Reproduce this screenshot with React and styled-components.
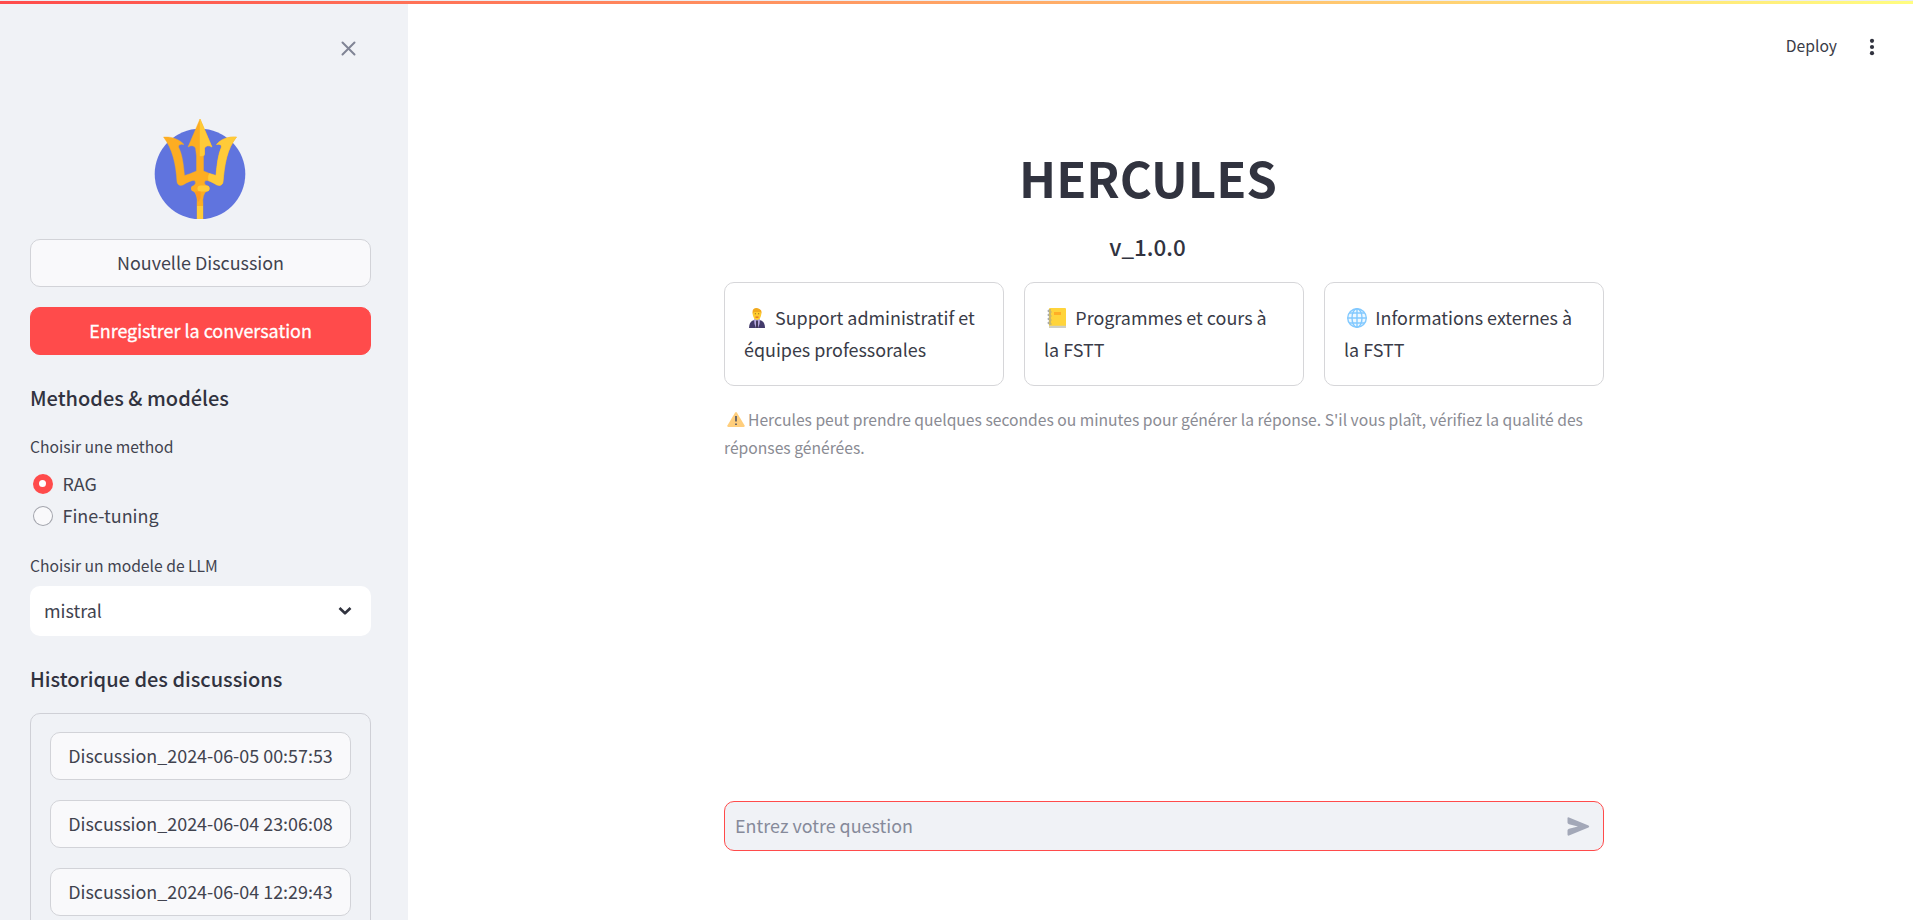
import React from "react";
import styled, { createGlobalStyle } from "styled-components";

const GlobalStyle = createGlobalStyle`
  * { box-sizing: border-box; }
  body {
    margin: 0;
    background: #fff;
    color: #393b47;
    font-family: "Noto Sans CJK SC", "Open Sans", sans-serif;
    font-size: 17.92px;
    overflow: hidden;
  }
  h1, h2, h3, p { margin: 0; }
  button, input { font: inherit; color: inherit; }
`;

const Page = styled.div`
  display: flex;
  height: 920px;
  overflow: hidden;
`;

const Decoration = styled.div`
  position: absolute;
  top: 0;
  left: 0;
  right: 0;
  height: 4px;
  border-top: 1px solid #eceef3;
  background: linear-gradient(90deg, #ff4b4b, #fffd80) padding-box;
`;

const Sidebar = styled.aside`
  flex: none;
  width: 408px;
  height: 920px;
  padding: 40px 37px 0 30px;
  background: #f0f2f6;
  color: #41434f;
  overflow: hidden;
`;

const CloseRow = styled.div`
  display: flex;
  justify-content: flex-end;
  height: 79px;
  padding: 0 14px 0 0;
`;

const Logo = styled.svg`
  display: block;
  width: 92px;
  height: 100px;
  margin: 0 0 20px 124px;
`;

const Button = styled.button`
  display: flex;
  align-items: center;
  justify-content: center;
  width: 100%;
  height: 48px;
  margin: 0 0 20px;
  padding: 0 0 3px;
  border: 1px solid ${(p) => (p.$primary ? "#ff4b4b" : "#d2d3d8")};
  border-radius: 10px;
  background: ${(p) => (p.$primary ? "#ff4b4b" : "#f9f9fb")};
  color: ${(p) => (p.$primary ? "#fff" : "#41434f")};
  white-space: nowrap;
  -webkit-text-stroke: ${(p) => (p.$primary ? "0.3px #fff" : "0")};
`;

const SideTitle = styled.h3`
  height: 27px;
  margin-top: ${(p) => p.$top || 0}px;
  color: #31333f;
  font-size: 20px;
  font-weight: 500;
  line-height: 27px;
`;

const Label = styled.p`
  height: 26px;
  margin-top: ${(p) => p.$top}px;
  font-size: 15.68px;
  line-height: 26px;
`;

const RadioGroup = styled.div`
  margin-top: 7px;
`;

const Radio = styled.label`
  display: flex;
  align-items: center;
  gap: 9.5px;
  height: 32px;
  padding-left: 3px;
  line-height: 32px;
`;

const Dot = styled.span`
  display: flex;
  align-items: center;
  justify-content: center;
  width: 20px;
  height: 20px;
  margin-top: 2px;
  border-radius: 50%;
  background: ${(p) => (p.$on ? "#ff4b4b" : "#a3a5ad")};

  &::after {
    content: "";
    width: ${(p) => (p.$on ? 7 : 18)}px;
    height: ${(p) => (p.$on ? 7 : 18)}px;
    margin: 0 1px 1px 0;
    border-radius: 50%;
    background: ${(p) => (p.$on ? "#fff" : "#f9f9fb")};
  }
`;

const Select = styled.div`
  display: flex;
  align-items: center;
  justify-content: space-between;
  height: 50px;
  margin-top: 7px;
  padding: 0 19px 1px 14px;
  border-radius: 10px;
  background: #fff;
`;

const SelectValue = styled.span`
  padding-bottom: 2px;
`;

const History = styled.div`
  height: 300px;
  margin-top: 21px;
  padding: 18px 19px;
  border: 1px solid #cfd0d6;
  border-radius: 10px;
`;

const Main = styled.main`
  flex: 1;
  display: flex;
  flex-direction: column;
  height: 920px;
`;

const Toolbar = styled.header`
  display: flex;
  justify-content: flex-end;
  align-items: center;
  gap: 31px;
  height: 75px;
  padding: 18px 37px 0 0;
  font-size: 15.68px;
`;

const DeployLabel = styled.span`
  padding-bottom: 2px;
`;

const Content = styled.div`
  display: flex;
  flex-direction: column;
  width: 880px;
  height: 845px;
  margin-left: 316px;
`;

const Title = styled.h1`
  margin: 69px 32px 0 0;
  color: #31333f;
  font-size: 49.1px;
  font-weight: 700;
  line-height: 66px;
  text-align: center;
`;

const Version = styled.h2`
  margin: 20px 33px 0 0;
  color: #31333f;
  font-size: 22.4px;
  font-weight: 500;
  line-height: 32px;
  text-align: center;
`;

const Cards = styled.div`
  display: grid;
  grid-template-columns: repeat(3, 1fr);
  gap: 20px;
  margin-top: 20px;
`;

const Card = styled.div`
  height: 104px;
  padding: 18px 10px 0 19px;
  border: 1px solid #d6d6d9;
  border-radius: 10px;
  line-height: 32px;
  white-space: nowrap;
`;

const Emoji = styled.svg`
  width: ${(p) => p.$w}px;
  height: 20px;
  margin: 0 ${(p) => p.$right}px 0 ${(p) => p.$left}px;
  vertical-align: -3px;
`;

const Caption = styled.p`
  margin-top: 20px;
  color: #8a8b93;
  font-size: 15.67px;
  line-height: 28px;
  white-space: nowrap;
`;

const ChatInput = styled.div`
  display: flex;
  align-items: center;
  justify-content: space-between;
  height: 50px;
  margin: auto 0 69px;
  padding: 0 13px 0 10px;
  border: 1px solid #ff4b4b;
  border-radius: 10px;
  background: #f0f2f6;
  color: #868a9a;
`;

const Placeholder = styled.span`
  padding-bottom: 2px;
`;

const SendIcon = styled.svg`
  width: 24px;
  height: 20px;
  margin-top: 1px;
`;

const history = [
  "Discussion_2024-06-05 00:57:53",
  "Discussion_2024-06-04 23:06:08",
  "Discussion_2024-06-04 12:29:43",
];

const Trident = () => (
  <Logo viewBox="0 0 92 100">
    <circle cx="46" cy="55" r="45.300" fill="#6074de" />
    <path d="M9.500 18 C18 17.500 25 20 30 25.500 Q24.500 24.500 24.500 28 C28.500 36 29.500 46 30.500 56.500 Q36 55 42.500 52 V37 L41.500 29 Q39 25 34 28 L46 0 L58 28 Q53 25 50.500 29 V36 L49.500 37 V52 Q56 55 62 56.500 C63 46 64 36 67.500 28 Q67.500 24.500 62.500 25.500 C67 20 74 17.500 82.500 18 C73 30 70.500 45 69 63 Q68 67.500 63 66 Q55 61 51.500 61.500 Q49 64 52.500 67 V72 Q48 76 49 85 V100 H43 V85 Q44 76 39.500 72 V67 Q43 64 40.500 61.500 Q37 61 29 66 Q24 67.500 23 63 C22 45 18.500 30 9.500 18Z" fill="#fdad22" stroke="#fdad22" strokeWidth=".4" />
    <path d="M46 0 L58 28 Q53 25 50.500 29 V35 Q50.500 37 48 37 H46Z M82.500 18 C74 17.500 67 20 62.500 25.500 Q67.500 24.500 67.500 28 C64 36 63 46 62 56.500 L55.500 54.500 Q53.500 57 54.500 61.500 Q58 63 63 66 Q68 67.500 69 63 C70.500 45 73 30 82.500 18Z" fill="#ffcb38" stroke="#ffcb38" strokeWidth=".4" />
    <rect x="37" y="66.500" width="18.500" height="6" rx="3" fill="#fdad22" />
    <rect x="43.500" y="66.500" width="12" height="6" rx="3" fill="#ffcb38" />
    <path d="M41 72.500 H46.500 V79 L44.500 83Z" fill="#ff9820" />
    <path d="M43 87 H49 V100 H43Z" fill="#ffcb38" />
  </Logo>
);

const Manager = () => (
  <Emoji viewBox="0 0 16 20" $w={16} $left={5} $right={10}>
    <path d="M0 20 Q0 14 4 12.500 L8 11 L12 12.500 Q16 14 16 20Z" fill="#433b6b" />
    <path d="M5 11 H11 L10.500 16 L9 20 H7 L5.500 16Z" fill="#b7a8de" />
    <path d="M7.200 12.500 H8.800 V20 H7.200Z" fill="#28213a" />
    <ellipse cx="8" cy="6.300" rx="4.200" ry="5.600" fill="#ffcc2f" />
    <path d="M3.700 6 C2.500 0 7 -1 10.500 1 Q13.300 2 12.300 6 L11.300 4 H5Z" fill="#f1a91e" />
    <circle cx="6.300" cy="5.700" r=".5" fill="#604425" />
    <circle cx="9.700" cy="5.700" r=".5" fill="#604425" />
    <path d="M6.500 8.600 H9.500 V9.700 H6.500Z" fill="#de5c23" />
  </Emoji>
);

const Notebook = () => (
  <Emoji viewBox="0 0 19 20" $w={19} $left={3} $right={9.3}>
    <rect x="2" width="17" height="20" rx="1" fill="#ffd43b" />
    <path d="M2 17.800 H19 V19 Q19 20 18 20 H3 Q2 20 2 19Z" fill="#cfcfc5" />
    <rect x="7" y="4" width="7" height="3" fill="#ffae26" />
    <path d="M4 2 H1.500 Q0 3.500 2 4 H4.500 M4 6 H1.500 Q0 7.500 2 8 H4.500 M4 10 H1.500 Q0 11.500 2 12 H4.500 M4 14 H1.500 Q0 15.500 2 16 H4.500" fill="none" stroke="#969b9c" strokeWidth="1" />
  </Emoji>
);

const Globe = () => (
  <Emoji viewBox="0 0 20 20" $w={20} $left={3} $right={8.3}>
    <circle cx="10" cy="10" r="9.300" fill="#eef8ff" />
    <g fill="none" stroke="#82c9ff" strokeWidth="1.400">
      <circle cx="10" cy="10" r="9.300" />
      <ellipse cx="10" cy="10" rx="5" ry="9.300" />
      <path d="M10 .7 V19.300 M.7 10 H19.300 M2.500 5 H17.500 M2.500 15 H17.500" />
    </g>
  </Emoji>
);

const Warning = () => (
  <Emoji viewBox="0 0 18 20" $w={18} $left={2.5} $right={3.5}>
    <path d="M8 3.700 Q9 2.400 10 3.700 L17.600 16.500 Q18 18 16.500 18 H1.500 Q0 18 .4 16.500Z" fill="#ffce7c" />
    <path d="M9 7 V12.500 M9 14.500 V16" stroke="#555765" strokeWidth="1.700" />
  </Emoji>
);

export default function App() {
  return (
    <>
      <GlobalStyle />
      <Page>
        <Sidebar>
          <CloseRow>
            <svg width="17" height="17" viewBox="0 0 17 17" stroke="#808495" strokeWidth="2" strokeLinecap="round">
              <path d="M2.500 2.500 L14.500 14.500 M14.500 2.500 L2.500 14.500" />
            </svg>
          </CloseRow>
          <Trident />
          <Button>Nouvelle Discussion</Button>
          <Button $primary>Enregistrer la conversation</Button>
          <SideTitle $top={29}>Methodes &amp; modéles</SideTitle>
          <Label $top={23}>Choisir une method</Label>
          <RadioGroup>
            <Radio><Dot $on />RAG</Radio>
            <Radio><Dot />Fine-tuning</Radio>
          </RadioGroup>
          <Label $top={22}>Choisir un modele de LLM</Label>
          <Select>
            <SelectValue>mistral</SelectValue>
            <svg width="14" height="10" viewBox="0 0 14 10" fill="none" stroke="#31333f" strokeWidth="2.600" strokeLinejoin="round">
              <path d="M1.500 2 L7 7.300 L12.500 2" />
            </svg>
          </Select>
          <SideTitle $top={29}>Historique des discussions</SideTitle>
          <History>
            {history.map((name) => <Button key={name}>{name}</Button>)}
          </History>
        </Sidebar>
        <Main>
          <Toolbar>
            <DeployLabel>Deploy</DeployLabel>
            <svg width="8" height="18" viewBox="0 0 8 18" fill="#31333f">
              <circle cx="4" cy="2.800" r="2.100" />
              <circle cx="4" cy="9" r="2.100" />
              <circle cx="4" cy="15.200" r="2.100" />
            </svg>
          </Toolbar>
          <Content>
            <Title>HERCULES</Title>
            <Version>v_1.0.0</Version>
            <Cards>
              <Card><Manager />Support administratif et<br />équipes professorales</Card>
              <Card><Notebook />Programmes et cours à<br />la FSTT</Card>
              <Card><Globe />Informations externes à<br />la FSTT</Card>
            </Cards>
            <Caption>
              <Warning />Hercules peut prendre quelques secondes ou minutes pour générer la réponse. S'il vous plaît, vérifiez la qualité des<br />réponses générées.
            </Caption>
            <ChatInput>
              <Placeholder>Entrez votre question</Placeholder>
              <SendIcon viewBox="0 0 24 20" fill="#a3a8b8">
                <path d="M1.500 1.300 Q1.500 0 3 .5 L22.500 8.600 Q24 9.500 22.500 10.400 L3 18.500 Q1.500 19 1.500 17.500 V13.500 Q1.500 12.300 3 11.800 L12 9.500 L3 7.200 Q1.500 6.700 1.500 5.500Z" />
              </SendIcon>
            </ChatInput>
          </Content>
        </Main>
      </Page>
      <Decoration />
    </>
  );
}
